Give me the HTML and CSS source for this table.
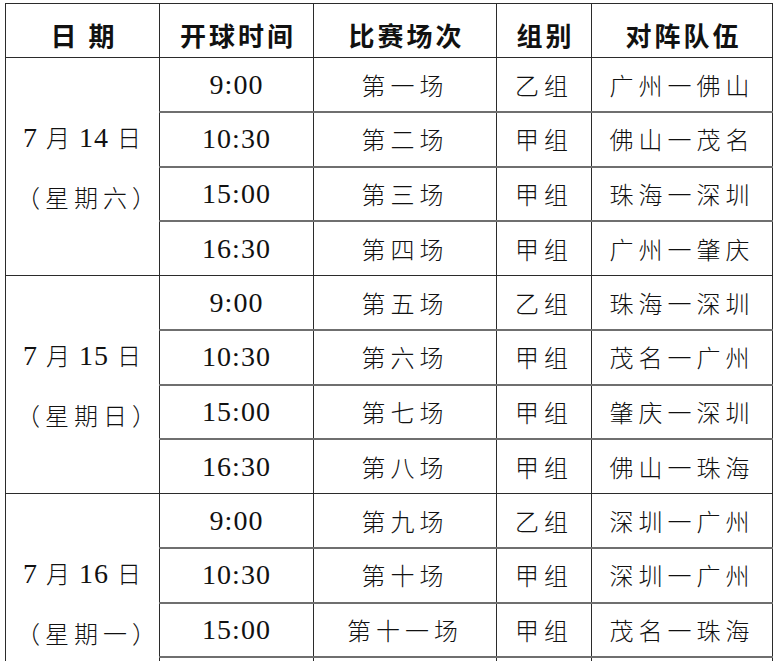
FILE: index.html
```html
<!DOCTYPE html>
<html lang="zh-CN">
<head>
<meta charset="utf-8">
<title>赛程表</title>
<link rel="stylesheet" href="styles.css">
</head>
<body>
<table class="schedule">
  <colgroup>
    <col class="c-date">
    <col class="c-time">
    <col class="c-match">
    <col class="c-group">
    <col class="c-teams">
  </colgroup>
  <thead>
    <tr class="head">
      <th>日 期</th>
      <th>开球时间</th>
      <th>比赛场次</th>
      <th>组别</th>
      <th>对阵队伍</th>
    </tr>
  </thead>
  <tbody>
    <tr class="first">
      <td class="date" rowspan="4"><div class="d1"><span class="n">7 </span>月<span class="n"> 14 </span>日</div><div class="d2">（星期六）</div></td>
      <td class="time">9:00</td><td class="cn">第一场</td><td class="cn">乙组</td><td class="cn">广州一佛山</td>
    </tr>
    <tr><td class="time">10:30</td><td class="cn">第二场</td><td class="cn">甲组</td><td class="cn">佛山一茂名</td></tr>
    <tr><td class="time">15:00</td><td class="cn">第三场</td><td class="cn">甲组</td><td class="cn">珠海一深圳</td></tr>
    <tr><td class="time">16:30</td><td class="cn">第四场</td><td class="cn">甲组</td><td class="cn">广州一肇庆</td></tr>

    <tr class="first">
      <td class="date" rowspan="4"><div class="d1"><span class="n">7 </span>月<span class="n"> 15 </span>日</div><div class="d2">（星期日）</div></td>
      <td class="time">9:00</td><td class="cn">第五场</td><td class="cn">乙组</td><td class="cn">珠海一深圳</td>
    </tr>
    <tr><td class="time">10:30</td><td class="cn">第六场</td><td class="cn">甲组</td><td class="cn">茂名一广州</td></tr>
    <tr><td class="time">15:00</td><td class="cn">第七场</td><td class="cn">甲组</td><td class="cn">肇庆一深圳</td></tr>
    <tr><td class="time">16:30</td><td class="cn">第八场</td><td class="cn">甲组</td><td class="cn">佛山一珠海</td></tr>

    <tr class="first">
      <td class="date" rowspan="4"><div class="d1"><span class="n">7 </span>月<span class="n"> 16 </span>日</div><div class="d2">（星期一）</div></td>
      <td class="time">9:00</td><td class="cn">第九场</td><td class="cn">乙组</td><td class="cn">深圳一广州</td>
    </tr>
    <tr><td class="time">10:30</td><td class="cn">第十场</td><td class="cn">甲组</td><td class="cn">深圳一广州</td></tr>
    <tr><td class="time">15:00</td><td class="cn">第十一场</td><td class="cn">甲组</td><td class="cn">茂名一珠海</td></tr>
    <tr><td class="time"></td><td class="cn"></td><td class="cn"></td><td class="cn"></td></tr>
  </tbody>
</table>
</body>
</html>
```

FILE: styles.css
```css
html, body {
  margin: 0;
  padding: 0;
  background: #ffffff;
}

body {
  padding: 3px 0 0 5px;
  color: #111;
  font-family: "Noto Sans CJK SC", "Liberation Serif", sans-serif;
}

.schedule {
  border-collapse: collapse;
  table-layout: fixed;
  width: 767px;
}

.c-date { width: 154px; }
.c-time { width: 154px; }
.c-match { width: 183px; }
.c-group { width: 95px; }
.c-teams { width: 181px; }

.schedule th,
.schedule td {
  border: 1px solid #2b2b2b;
  text-align: center;
  vertical-align: middle;
  padding: 0;
}

.head {
  height: 54px;
}

.head th {
  font-family: "Noto Sans CJK SC", sans-serif;
  font-weight: 700;
  font-size: 26px;
  letter-spacing: 3px;
  padding: 9px 0 0 3px;
  line-height: 40px;
  color: #111;
}

.schedule tbody tr {
  height: 54.5px;
}

.schedule tbody tr:not(.first) td:not(.date) {
  border-top: 2px solid #6f6f6f;
}

.time {
  font-family: "Liberation Serif", serif;
  font-size: 28px;
  letter-spacing: 1px;
  padding: 8px 0 0 1px;
  line-height: 40px;
}

.cn {
  font-family: "Noto Sans CJK SC", sans-serif;
  font-weight: 300;
  font-size: 24px;
  letter-spacing: 5px;
  padding: 6px 0 0 5px;
  line-height: 40px;
}

.date {
  font-family: "Noto Sans CJK SC", sans-serif;
  font-weight: 300;
  font-size: 24px;
  line-height: 59px;
  padding: 0;
}

.date .d1 {
  letter-spacing: 1px;
}

.date .d2 {
  letter-spacing: 5px;
  padding-left: 10px;
}

.date .n {
  font-family: "Liberation Serif", serif;
  font-weight: 400;
  font-size: 28px;
}
```
